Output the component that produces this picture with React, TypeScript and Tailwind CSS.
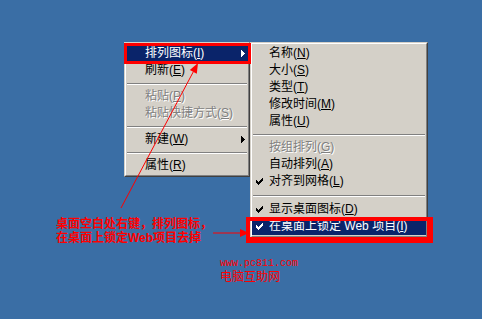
import React from 'react'

type Row =
  | 'sep'
  | 'sepw'
  | {
      label: string
      hot: string
      disabled?: boolean
      checked?: boolean
      sub?: boolean
      active?: boolean
    }

const mainRows: Row[] = [
  { label: '排列图标', hot: 'I', sub: true, active: true },
  { label: '刷新', hot: 'E' },
  'sep',
  { label: '粘贴', hot: 'P', disabled: true },
  { label: '粘贴快捷方式', hot: 'S', disabled: true },
  'sep',
  { label: '新建', hot: 'W', sub: true },
  'sep',
  { label: '属性', hot: 'R' },
]

const arrangeRows: Row[] = [
  { label: '名称', hot: 'N' },
  { label: '大小', hot: 'S' },
  { label: '类型', hot: 'T' },
  { label: '修改时间', hot: 'M' },
  { label: '属性', hot: 'U' },
  'sep',
  { label: '按组排列', hot: 'G', disabled: true },
  { label: '自动排列', hot: 'A' },
  { label: '对齐到网格', hot: 'L', checked: true },
  'sepw',
  { label: '显示桌面图标', hot: 'D', checked: true },
  { label: '在桌面上锁定 Web 项目', hot: 'I', checked: true, active: true },
]

const Check = ({ white }: { white?: boolean }) => (
  <svg width="7" height="7" viewBox="0 0 7 7" shapeRendering="crispEdges" className="shrink-0">
    <path
      d="M6 0h1v3h-1zM5 1h1v3h-1zM4 2h1v3h-1zM3 3h1v3h-1zM2 4h1v3h-1zM1 3h1v3h-1zM0 2h1v3h-1z"
      fill={white ? '#ffffff' : '#000000'}
    />
  </svg>
)

const SubArrow = ({ white }: { white?: boolean }) => (
  <svg width="4" height="7" viewBox="0 0 4 7" shapeRendering="crispEdges" className="shrink-0">
    <path d="M0 0h1v7h-1zM1 1h1v5h-1zM2 2h1v3h-1zM3 3h1v1h-1z" fill={white ? '#ffffff' : '#000000'} />
  </svg>
)

function Menu({ rows, width, textLeft, checkLeft }: { rows: Row[]; width: string; textLeft: string; checkLeft: string }) {
  return (
    <div className={`${width} bg-[#d4d0c8] border border-t-[#d4d0c8] border-l-[#d4d0c8] border-r-[#404040] border-b-[#404040]`}>
      <div className="border border-t-white border-l-white border-r-[#808080] border-b-[#808080] py-px">
        {rows.map((r, i) =>
          r === 'sep' || r === 'sepw' ? (
            <div key={i} className={`${r === 'sepw' ? 'h-[11px]' : 'h-[9px]'} flex flex-col justify-center mx-px`}>
              <div className="h-px bg-[#808080]" />
              <div className="h-px bg-white" />
            </div>
          ) : (
            <div
              key={i}
              className={`h-[17px] flex items-center ${r.active ? 'bg-[#0a246a] text-white' : 'text-black'}`}
            >
              <div className={`${checkLeft} w-[7px] shrink-0`}>{r.checked && <Check white={r.active} />}</div>
              <span
                className={`${textLeft} whitespace-nowrap ${
                  r.disabled ? 'text-[#808080] [text-shadow:1px_1px_0_#ffffff]' : ''
                }`}
              >
                {r.label}(<span className="underline underline-offset-1">{r.hot}</span>)
              </span>
              {r.sub && (
                <div className="ml-auto mr-[3px]">
                  <SubArrow white={r.active} />
                </div>
              )}
            </div>
          )
        )}
      </div>
    </div>
  )
}

export default function App() {
  return (
    <div className="relative w-[482px] h-[319px] overflow-hidden bg-[#3a6ea5] font-['Liberation_Sans','Noto_Sans_CJK_SC',sans-serif] text-[12px] leading-[17px]">
      {/* context menu with its 排列图标 submenu */}
      <div className="absolute left-[124px] top-[42px] flex items-start">
        <Menu rows={mainRows} width="w-[126px]" textLeft="pl-[7px]" checkLeft="ml-[5px]" />
        <Menu rows={arrangeRows} width="w-[178px]" textLeft="pl-[6px]" checkLeft="ml-[4px]" />
      </div>

      {/* red highlight boxes */}
      <div className="absolute left-[124px] top-[43px] w-[127px] h-[21px] border-[3px] border-[#ff0000]" />
      <div className="absolute left-[246px] top-[217px] w-[187px] h-[26px] border-[#ff0000] border-t-[4px] border-l-[4px] border-r-[6px] border-b-[6px]" />

      {/* annotation */}
      <div className="absolute left-[56px] top-[217px] flex flex-col text-[#ff0000] font-bold text-[12px] leading-[14px] whitespace-nowrap">
        <div>桌面空白处右键，排列图标，</div>
        <div>在桌面上锁定Web项目去掉</div>
      </div>

      <div className="absolute left-[220px] top-[258px] flex flex-col text-[#ff0000] whitespace-nowrap">
        <div className="font-['Liberation_Mono',monospace] text-[10px] leading-[12px]">www.pc811.com</div>
        <div className="text-[12px] leading-[14px]">电脑互助网</div>
      </div>

      <svg className="absolute inset-0 pointer-events-none" width="482" height="319" viewBox="0 0 482 319">
        <line x1="121" y1="208" x2="193.3" y2="71.8" stroke="#ff0000" strokeWidth="1" />
        <polygon points="198,63 196.8,73.7 189.8,69.9" fill="#ff0000" />
        <line x1="213" y1="233" x2="241" y2="233" stroke="#ff0000" strokeWidth="1" />
        <polygon points="240,229 249,233 240,237" fill="#ff0000" />
      </svg>
    </div>
  )
}
